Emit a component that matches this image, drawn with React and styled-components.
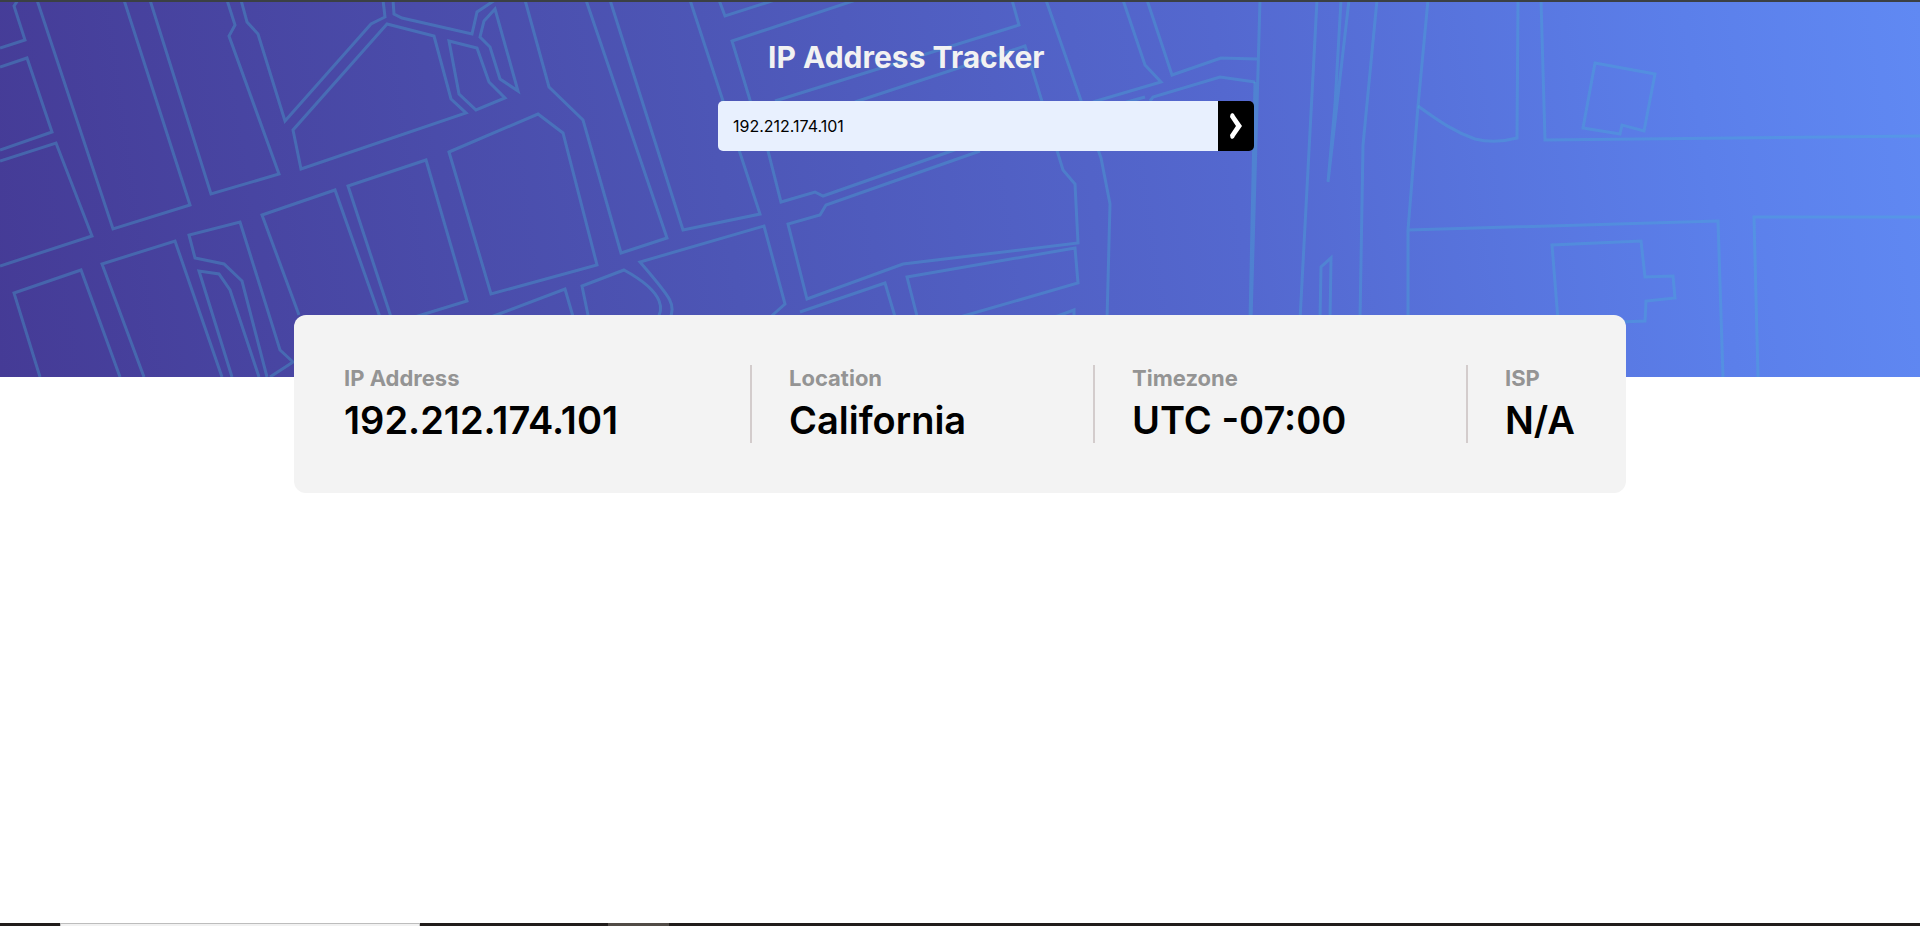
import React from "react";
import styled, { createGlobalStyle } from "styled-components";

const Global = createGlobalStyle`
  * { box-sizing: border-box; margin: 0; padding: 0; }
  body { background: #fff; font-family: Inter, "Liberation Sans", sans-serif; color: #000; }
`;

const Page = styled.div`
  min-height: 100vh;
  display: flex;
  flex-direction: column;
`;

const TopEdge = styled.div`
  height: 2px;
  background: #3b4044;
`;

const Header = styled.header`
  position: relative;
  height: 375px;
  padding: 37px 0 0 52px;
  display: flex;
  flex-direction: column;
  align-items: center;
  background: linear-gradient(82deg, #453b96 0%, #4d56b6 38%, #5468cf 64%, #5b7fea 88%, #6089f3 100%);
  overflow: hidden;
`;

const Streets = styled.svg`
  position: absolute;
  inset: 0;
  width: 100%;
  height: 100%;
  fill: none;
  stroke: rgba(70, 178, 212, 0.34);
  stroke-width: 3;
`;

const Search = styled.div`
  position: relative;
  width: 536px;
  max-width: 100%;
`;

const Title = styled.h1`
  padding-left: 50px;
  font-size: 30px;
  line-height: 36px;
  font-weight: 700;
  color: #f2f2f2;
  white-space: nowrap;
`;

const Form = styled.form`
  display: flex;
  height: 50px;
  margin-top: 26px;
`;

const AddressInput = styled.input`
  flex: 1;
  min-width: 0;
  border: 0;
  border-radius: 5px 0 0 5px;
  padding: 0 15px;
  background: #e8f0fe;
  font: 400 16px/20px Inter, "Liberation Sans", sans-serif;
  color: #000;
  outline: 0;
`;

const Submit = styled.button`
  width: 36px;
  border: 0;
  border-radius: 0 5px 5px 0;
  background: #000;
  display: grid;
  place-items: center;
  cursor: pointer;
`;

const Card = styled.dl`
  position: relative;
  width: calc(100% - 588px);
  min-width: 1000px;
  margin: -62px auto 0;
  padding: 50px;
  border-radius: 12px;
  background: #f3f3f3;
  display: grid;
  grid-template-columns: 406fr 343fr 373fr 110fr;
`;

const Stat = styled.div`
  min-width: 0;
  & + & {
    padding-left: 37px;
    border-left: 2px solid #d3cccc;
  }
`;

const Label = styled.dt`
  margin-bottom: 6px;
  font-size: 22px;
  line-height: 26px;
  font-weight: 700;
  color: #949494;
  white-space: nowrap;
`;

const Value = styled.dd`
  font-size: 38px;
  line-height: 46px;
  font-weight: 600;
  white-space: nowrap;
`;

const BottomEdge = styled.div`
  margin-top: auto;
  height: 3px;
  display: flex;
  background: #211d1b;
`;

const Gap = styled.span`
  width: ${(p) => p.$w}px;
`;

const SearchTab = styled.span`
  width: 360px;
  border: solid #bdbdbd;
  border-width: 1px 1px 0;
  background: #f2f2f2;
`;

const ActiveTab = styled.span`
  width: 61px;
  background: #514b46;
`;

const streetPaths = [
  "M18 0 14 6 25 40 0 48",
  "M0 67 27 58 52 132 0 150",
  "M0 161 56 143 92 236 0 266",
  "M37 0 113 229 190 205 124 0",
  "M150 0 211 194 279 174 229 36 235 25 227 0",
  "M241 0 247 22 258 34 285 121 371 24 385 17 383 0",
  "M393 0 394 14 402 18 472 34 477 12 495 0",
  "M387 24 293 130 301 169 466 113 451 99 434 36Z",
  "M449 41 477 48 489 82 505 98 476 110 459 94Z",
  "M495 9 518 91 500 79 490 47 480 37 484 21Z",
  "M40 377 14 293 81 270 120 377",
  "M144 377 102 264 175 241 222 377",
  "M232 377 199 271 219 274 230 290 259 377",
  "M267 377 242 281 224 264 195 258 189 235 240 222 280 350 293 362 270 377",
  "M299 315 262 215 335 190 381 320",
  "M392 320 348 186 426 160 467 301 405 320",
  "M449 152 538 114 563 133 597 265 491 294Z",
  "M525 0 549 87 583 120 621 253 667 238 586 0",
  "M610 0 683 230 760 214 690 0",
  "M719 0 725 16 775 0",
  "M856 0 732 41 750 100 768 151 781 202 815 192 823 196 960 148",
  "M1012 0 1019 25 775 101",
  "M855 102 1025 46 1063 170 1075 184 1078 243 903 264 807 299 788 224 820 215 826 205 980 151",
  "M1046 0 1101 158 1110 204 1107 320",
  "M1123 0 1145 65 1161 82 1093 102",
  "M1147 0 1172 75 1221 58 1257 59",
  "M1120 104 1145 97M1150 101 1153 97 1220 77 1255 82",
  "M483 320 565 289 574 320",
  "M589 320 582 286 624 270C668 294 663 312 656 320",
  "M669 320C678 305 669 296 640 262L764 226 785 304 767 320",
  "M800 312 885 283 896 320",
  "M918 320 907 277 1075 248 1078 283 960 317",
  "M1055 317 1074 310 1074 320",
  "M1260 0 1251 320M1255 82 1250 320",
  "M1317 0 1300 320M1341 0 1335 105 1328 182 1349 0",
  "M1377 0 1363 145 1360 320",
  "M1428 0 1418 106 1408 230 1408 320M1408 230 1718 221 1723 377",
  "M1418 106C1440 122 1455 132 1475 139Q1495 144 1517 138L1518 0",
  "M1541 0 1545 140 1920 136",
  "M1595 63 1655 74 1644 131 1622 125 1620 134 1583 128Z",
  "M1920 217 1754 217 1758 377",
  "M1558 320 1552 245 1641 241 1645 277 1673 276 1675 298 1646 301 1645 321 1620 322",
  "M1320 320 1321 267 1331 258 1330 320",
];

const stats = [
  ["IP Address", "192.212.174.101"],
  ["Location", "California"],
  ["Timezone", "UTC -07:00"],
  ["ISP", "N/A"],
];

export default function App() {
  return (
    <Page>
      <Global />
      <TopEdge />
      <Header>
        <Streets viewBox="0 2 1920 375" preserveAspectRatio="xMidYMid slice" aria-hidden="true">
          {streetPaths.map((d) => <path key={d} d={d} />)}
        </Streets>
        <Search>
          <Title>IP Address Tracker</Title>
          <Form onSubmit={(e) => e.preventDefault()}>
            <AddressInput aria-label="IP address" defaultValue="192.212.174.101" />
            <Submit type="submit" aria-label="Search">
              <svg width="14" height="28" viewBox="0 0 14 28" fill="#fff">
                <path d="M3 1Q1 2 1 5L7 14 1 23Q1 26 3 27Q5 27 6 24L13 14 6 4Q5 1 3 1Z" />
              </svg>
            </Submit>
          </Form>
        </Search>
      </Header>
      <Card>
        {stats.map(([label, value]) => (
          <Stat key={label}>
            <Label>{label}</Label>
            <Value>{value}</Value>
          </Stat>
        ))}
      </Card>
      <BottomEdge>
        <Gap $w={60} />
        <SearchTab />
        <Gap $w={188} />
        <ActiveTab />
      </BottomEdge>
    </Page>
  );
}
